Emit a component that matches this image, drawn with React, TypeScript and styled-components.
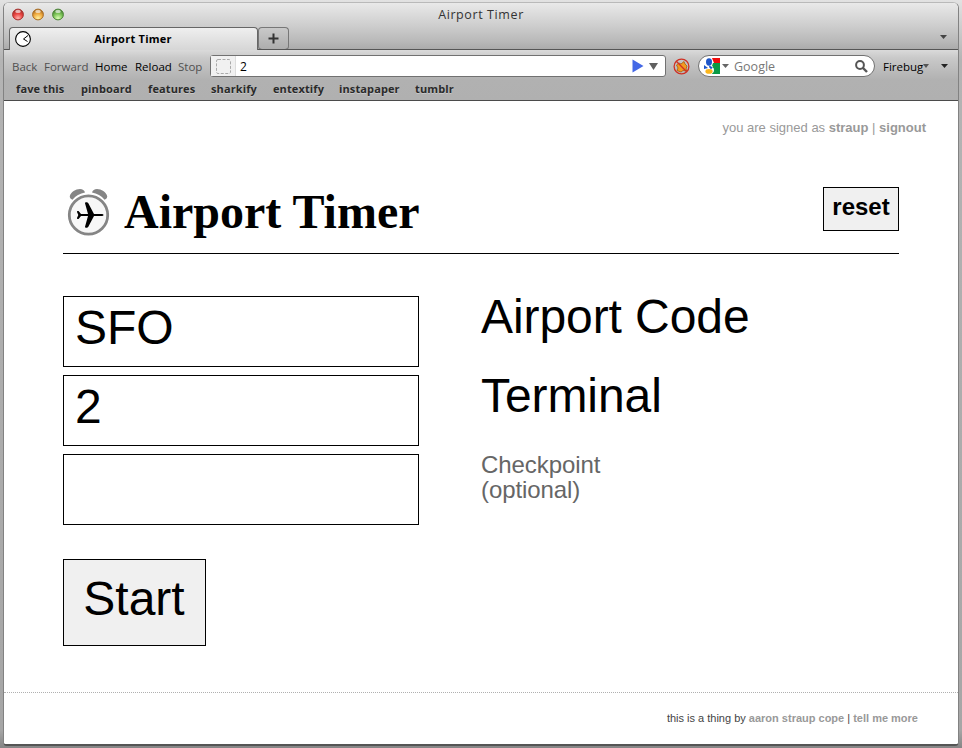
import React from "react";
import styled, { createGlobalStyle } from "styled-components";

const GlobalStyle = createGlobalStyle`
  * { box-sizing: border-box; }
  html, body { margin: 0; padding: 0; }
  body { overflow: hidden; background: #fff; }
`;

const chromeFont = `"Open Sans", "Noto Sans", sans-serif`;
const pageFont = `"Liberation Sans", Arial, sans-serif`;

const Desktop = styled.div`
  width: 962px;
  height: 748px;
  padding: 2px 3px 2px 3px;
  background: linear-gradient(#e2e2e2 0, #b4b4b4 60px, #a6a6a6 730px, #858585 748px);
`;

const Window = styled.div`
  width: 956px;
  height: 744px;
  display: flex;
  flex-direction: column;
  border: 1px solid #828282;
  border-top-color: #b9b9b9;
  border-bottom: 2px solid #555;
  border-radius: 6px 6px 4px 4px;
  overflow: hidden;
  background: #fff;
  font-family: ${chromeFont};
`;

const TitleArea = styled.div`
  height: 47px;
  flex: none;
  display: flex;
  flex-direction: column;
  background: linear-gradient(#e9e9e9 0, #cdcdcd 23px, #b9b9b9 38px, #a9a9a9 47px);
`;

const TitleRow = styled.div`
  height: 24px;
  display: grid;
  grid-template-columns: 100px 1fr 100px;
  align-items: center;
  padding-left: 8px;
`;

const Lights = styled.div`
  display: flex;
  gap: 8px;
  padding-bottom: 2px;
`;

const WindowTitle = styled.div`
  font-size: 12.5px;
  line-height: 20px;
  letter-spacing: 0.6px;
  text-align: center;
  color: #333;
  padding-right: 8px;
`;

const TabRow = styled.div`
  height: 23px;
  display: flex;
  align-items: flex-end;
  box-shadow: inset 0 -1px #555;
`;

const Tab = styled.div`
  width: 249px;
  height: 23px;
  margin-left: 5px;
  display: flex;
  align-items: center;
  padding-left: 5px;
  border: 1px solid #666;
  border-bottom: 0;
  border-radius: 4px 4px 0 0;
  background: linear-gradient(#efefef, #d6d6d6);
`;

const TabTitle = styled.div`
  width: 200px;
  padding: 0 0 2px 4px;
  text-align: center;
  font-size: 11px;
  font-weight: 700;
  letter-spacing: 0.25px;
  color: #000;
`;

const NewTab = styled.div`
  width: 31px;
  height: 23px;
  display: flex;
  align-items: center;
  justify-content: center;
  border: 1px solid #777;
  border-radius: 4px;
  border-bottom-color: #555;
  background: linear-gradient(#c9c9c9, #adadad);
`;

const TabMenu = styled.div`
  margin-left: auto;
  padding-right: 11px;
  height: 15px;
  display: flex;
`;

const Toolbars = styled.div`
  height: 51px;
  flex: none;
  border-bottom: 1px solid #4b4b4b;
  background: linear-gradient(#dadada 0, #c9c9c9 8px, #b1b1b1 30px, #b0b0b0 50px);
`;

const NavBar = styled.div`
  height: 30px;
  display: flex;
  align-items: center;
  padding: 2px 0 0 8px;
`;

const NavButton = styled.div<{ $w: number; $enabled?: boolean }>`
  width: ${(p) => p.$w}px;
  flex: none;
  padding-top: 2px;
  font-size: 11.5px;
  line-height: 16px;
  white-space: nowrap;
  color: ${(p) => (p.$enabled ? "#000" : "#505050")};
`;

const UrlBar = styled.div`
  width: 456px;
  height: 22px;
  flex: none;
  display: flex;
  align-items: center;
  border: 1px solid #717171;
  border-radius: 3px;
  background: #fff;
`;

const SiteIcon = styled.div`
  width: 25px;
  height: 20px;
  display: flex;
  align-items: center;
  justify-content: center;
  background: #f1f1f1;
  border-right: 1px solid #ddd;
`;

const Url = styled.div`
  flex: 1;
  padding: 2px 0 0 4px;
  font-size: 12px;
  line-height: 18px;
  color: #000;
`;

const UrlActions = styled.div`
  display: flex;
  align-items: center;
  gap: 5px;
  padding-right: 7px;
`;

const BlockIcon = styled.div`
  width: 32px;
  flex: none;
  display: flex;
  justify-content: center;
  padding-right: 1px;
`;

const SearchBox = styled.div`
  width: 177px;
  height: 22px;
  flex: none;
  display: flex;
  align-items: center;
  padding: 0 6px 0 5px;
  border: 1px solid #717171;
  border-radius: 11px;
  background: #fff;
`;

const SearchText = styled.div`
  flex: 1;
  padding: 2px 0 0 5px;
  font-size: 12.5px;
  line-height: 18px;
  color: #777;
`;

const Firebug = styled.div`
  display: flex;
  align-items: center;
  padding: 2px 0 0 8px;
  font-size: 11.5px;
  line-height: 16px;
  color: #000;
`;

const Arrow = styled.svg<{ $left?: number; $up?: number }>`
  flex: none;
  display: block;
  margin-left: ${(p) => p.$left ?? 0}px;
  margin-bottom: ${(p) => p.$up ?? 0}px;
`;

const Bookmarks = styled.div`
  height: 20px;
  display: flex;
  align-items: center;
  padding: 0 0 2px 12px;
`;

const Bookmark = styled.div<{ $w: number }>`
  width: ${(p) => p.$w}px;
  font-size: 11px;
  font-weight: 700;
  line-height: 16px;
  letter-spacing: 0.12px;
  white-space: nowrap;
  color: #2a2a2a;
  text-shadow: 0 1px rgba(255, 255, 255, 0.3);
`;

const Page = styled.main`
  flex: 1;
  display: flex;
  flex-direction: column;
  background: #fff;
  font-family: ${pageFont};
`;

const SignedIn = styled.div`
  height: 86px;
  flex: none;
  padding: 19px 32px 0 0;
  text-align: right;
  font-size: 13px;
  line-height: 16px;
  color: #999;
`;

const Header = styled.header`
  width: 836px;
  height: 67px;
  flex: none;
  margin-left: 59px;
  display: flex;
  align-items: flex-start;
  border-bottom: 1px solid #000;
`;

const Logo = styled.svg`
  display: block;
  width: 50px;
  height: 52px;
  flex: none;
`;

const Title = styled.h1`
  flex: 1;
  margin: 0;
  padding-left: 11px;
  font: 700 48px/50px "Liberation Serif", "Times New Roman", serif;
  letter-spacing: 0;
  color: #000;
`;

const ResetButton = styled.button`
  width: 76px;
  height: 44px;
  padding: 0 0 4px;
  border: 1px solid #000;
  background: #f0f0f0;
  font: 700 24px/38px ${pageFont};
  color: #000;
`;

const Form = styled.form`
  flex: none;
  margin: 42px 0 0 59px;
  display: flex;
  flex-direction: column;
  gap: 8px;
`;

const Field = styled.label`
  height: 71px;
  display: grid;
  grid-template-columns: 356px 1fr;
  column-gap: 62px;
  align-items: start;
`;

const FieldBox = styled.div`
  height: 71px;
  padding-left: 11px;
  border: 1px solid #000;
  font-size: 48px;
  line-height: 61px;
  color: #000;
`;

const FieldName = styled.div<{ $optional?: boolean }>`
  width: ${(p) => (p.$optional ? "140px" : "auto")};
  margin-top: ${(p) => (p.$optional ? "-2px" : "0")};
  font-size: ${(p) => (p.$optional ? 24 : 48)}px;
  line-height: ${(p) => (p.$optional ? 25 : 41)}px;
  letter-spacing: -0.08px;
  color: ${(p) => (p.$optional ? "#666" : "#000")};
`;

const StartButton = styled.button`
  width: 143px;
  height: 87px;
  margin-top: 26px;
  padding: 0 1px 7px 0;
  border: 1px solid #000;
  background: #f0f0f0;
  font: 48px/60px ${pageFont};
  color: #000;
`;

const Footer = styled.footer`
  margin-top: 46px;
  padding: 18px 40px 0 0;
  border-top: 1px dotted #b0b0b0;
  text-align: right;
  font-size: 11px;
  line-height: 14px;
  color: #444;
`;

const Link = styled.b`
  color: #999;
`;

const Down = ({ w = 7, h = 4, fill = "#444", left = 0, up = 0 }) => (
  <Arrow width={w} height={h} viewBox="0 0 10 10" preserveAspectRatio="none" $left={left} $up={up}>
    <path d="M0 0H10L5 10Z" fill={fill} />
  </Arrow>
);

const Light = ({ id, dark, mid, pale }: { id: string; dark: string; mid: string; pale: string }) => (
  <svg width="12" height="13" viewBox="0 0 12 13">
    <defs>
      <radialGradient id={id} cx="50%" cy="85%" r="75%">
        <stop offset="0" stopColor={pale} />
        <stop offset="0.6" stopColor={mid} />
        <stop offset="1" stopColor={dark} />
      </radialGradient>
    </defs>
    <circle cx="6" cy="6.5" r="5.4" fill={`url(#${id})`} stroke={dark} strokeWidth="1" />
    <ellipse cx="6" cy="3.4" rx="2.8" ry="1.6" fill="#fff" opacity="0.65" />
  </svg>
);

const TabClock = () => (
  <svg width="16" height="16" viewBox="0 0 16 16">
    <circle cx="8" cy="8" r="7.4" fill="#fff" stroke="#000" strokeWidth="1.1" />
    <path d="M13 4.500L8.500 8L12.500 10.500" fill="none" stroke="#000" strokeWidth="1" />
  </svg>
);

const AlarmLogo = () => (
  <Logo viewBox="0 0 50 52">
    <path d="M9.500 12.800C7.500 12 6.500 10.500 6.800 9C8 5 12.500 2.200 17 2C19.500 2 21.500 3.200 22 5.600C17 6.600 12.500 9 9.500 12.800Z" fill="#858585" />
    <path d="M41.500 12.800C43.500 12 44.500 10.500 44.200 9C43 5 38.500 2.200 34 2C31.500 2 29.500 3.200 29 5.600C34 6.600 38.500 9 41.500 12.800Z" fill="#858585" />
    <circle cx="25.500" cy="28" r="19.200" fill="#f7f7f7" stroke="#858585" strokeWidth="2.800" />
    <path
      d="M40.500 28C40.500 27.200 39.500 26.900 38.500 26.900H31L25.200 16C24.600 15 21.800 14.900 22 16.300L25 26.900L18 27.100L15.800 24.300C15.200 23.700 13.800 23.900 14 24.900L15.300 28L14 31.100C13.800 32.100 15.200 32.300 15.800 31.700L18 28.900L25 29.100L22 39.700C21.800 41.100 24.600 41 25.200 40L31 29.100H38.500C39.500 29.100 40.500 28.800 40.500 28Z"
      fill="#000"
    />
  </Logo>
);

const Blocked = () => (
  <svg width="17" height="17" viewBox="0 0 17 17">
    <path d="M3.500 7L6 5L8 6L11 3.500L12 6L14 8L13 11L14 13L10 12.500L8 14L4 12.500L5 10Z" fill="#f39a1f" stroke="#a65b12" strokeWidth="0.8" />
    <circle cx="8.500" cy="8.500" r="7.400" fill="none" stroke="#d03024" strokeWidth="1.300" />
    <path d="M3.300 3.300L13.700 13.700" stroke="#d03024" strokeWidth="1.300" />
  </svg>
);

const GoogleIcon = () => (
  <svg width="16" height="16" viewBox="0 0 16 16">
    <path d="M8 0H16V5H10Z" fill="#f00d0d" />
    <path d="M9 5H16V16H8L10 11L8 8Z" fill="#0a9a45" />
    <path d="M0 7L4 10L0 11Z" fill="#1d55c8" />
    <path d="M6 6L9 9V11C11 12 10 16 5 16C0 16 0 11 4 11L6.500 10.500L4 8Z" fill="#fff" />
    <ellipse cx="5" cy="4" rx="3" ry="3.700" fill="#1d55c8" />
    <path d="M5.500 7.500L8.800 9.500L7 11.200L5 9Z" fill="#1d55c8" />
    <ellipse cx="5" cy="13.400" rx="3.600" ry="2.300" fill="#fbb51b" />
  </svg>
);

const bookmarks: [string, number][] = [
  ["fave this", 65],
  ["pinboard", 67],
  ["features", 63],
  ["sharkify", 62],
  ["entextify", 66],
  ["instapaper", 76],
  ["tumblr", 60],
];

export default function App() {
  return (
    <>
      <GlobalStyle />
      <Desktop>
        <Window>
          <TitleArea>
            <TitleRow>
              <Lights>
                <Light id="close" dark="#a8322f" mid="#e8423f" pale="#ffb3ae" />
                <Light id="minimise" dark="#a96d24" mid="#f0a93e" pale="#fff2a0" />
                <Light id="zoom" dark="#4b8437" mid="#79c255" pale="#dcffb5" />
              </Lights>
              <WindowTitle>Airport Timer</WindowTitle>
            </TitleRow>
            <TabRow>
              <Tab>
                <TabClock />
                <TabTitle>Airport Timer</TabTitle>
              </Tab>
              <NewTab>
                <svg width="11" height="11" viewBox="0 0 11 11">
                  <path d="M5.500 0.500V10.500M0.500 5.500H10.500" stroke="#333" strokeWidth="2" />
                </svg>
              </NewTab>
              <TabMenu>
                <Down />
              </TabMenu>
            </TabRow>
          </TitleArea>
          <Toolbars>
            <NavBar>
              <NavButton $w={32}>Back</NavButton>
              <NavButton $w={51}>Forward</NavButton>
              <NavButton $w={40} $enabled>Home</NavButton>
              <NavButton $w={43} $enabled>Reload</NavButton>
              <NavButton $w={32}>Stop</NavButton>
              <UrlBar>
                <SiteIcon>
                  <svg width="15" height="15" viewBox="0 0 15 15">
                    <rect x="0.500" y="0.500" width="14" height="14" rx="1.500" fill="none" stroke="#aaa" strokeDasharray="3 1.500" />
                  </svg>
                </SiteIcon>
                <Url>2</Url>
                <UrlActions>
                  <svg width="12" height="14" viewBox="0 0 12 14">
                    <path d="M0.500 0.500L11.500 7L0.500 13.500Z" fill="#4468e6" />
                  </svg>
                  <Down w={9} h={7} fill="#606060" />
                </UrlActions>
              </UrlBar>
              <BlockIcon>
                <Blocked />
              </BlockIcon>
              <SearchBox>
                <GoogleIcon />
                <Down w={7} h={4} fill="#666" left={2} />
                <SearchText>Google</SearchText>
                <svg width="13" height="13" viewBox="0 0 13 13">
                  <circle cx="5" cy="5" r="3.900" fill="none" stroke="#555" strokeWidth="2" />
                  <path d="M8 8L12 12" stroke="#555" strokeWidth="2.400" />
                </svg>
              </SearchBox>
              <Firebug>
                Firebug
                <Down w={6} h={4} fill="#555" left={0} up={2} />
                <Down w={7} h={4} fill="#222" left={12} up={2} />
              </Firebug>
            </NavBar>
            <Bookmarks>
              {bookmarks.map(([name, w]) => (
                <Bookmark key={name} $w={w}>{name}</Bookmark>
              ))}
            </Bookmarks>
          </Toolbars>
          <Page>
            <SignedIn>
              you are signed as <Link>straup</Link> | <Link>signout</Link>
            </SignedIn>
            <Header>
              <AlarmLogo />
              <Title>Airport Timer</Title>
              <ResetButton>reset</ResetButton>
            </Header>
            <Form onSubmit={(e) => e.preventDefault()}>
              <Field>
                <FieldBox>SFO</FieldBox>
                <FieldName>Airport Code</FieldName>
              </Field>
              <Field>
                <FieldBox>2</FieldBox>
                <FieldName>Terminal</FieldName>
              </Field>
              <Field>
                <FieldBox />
                <FieldName $optional>Checkpoint (optional)</FieldName>
              </Field>
              <StartButton>Start</StartButton>
            </Form>
            <Footer>
              this is a thing by <Link>aaron straup cope</Link> | <Link>tell me more</Link>
            </Footer>
          </Page>
        </Window>
      </Desktop>
    </>
  );
}
